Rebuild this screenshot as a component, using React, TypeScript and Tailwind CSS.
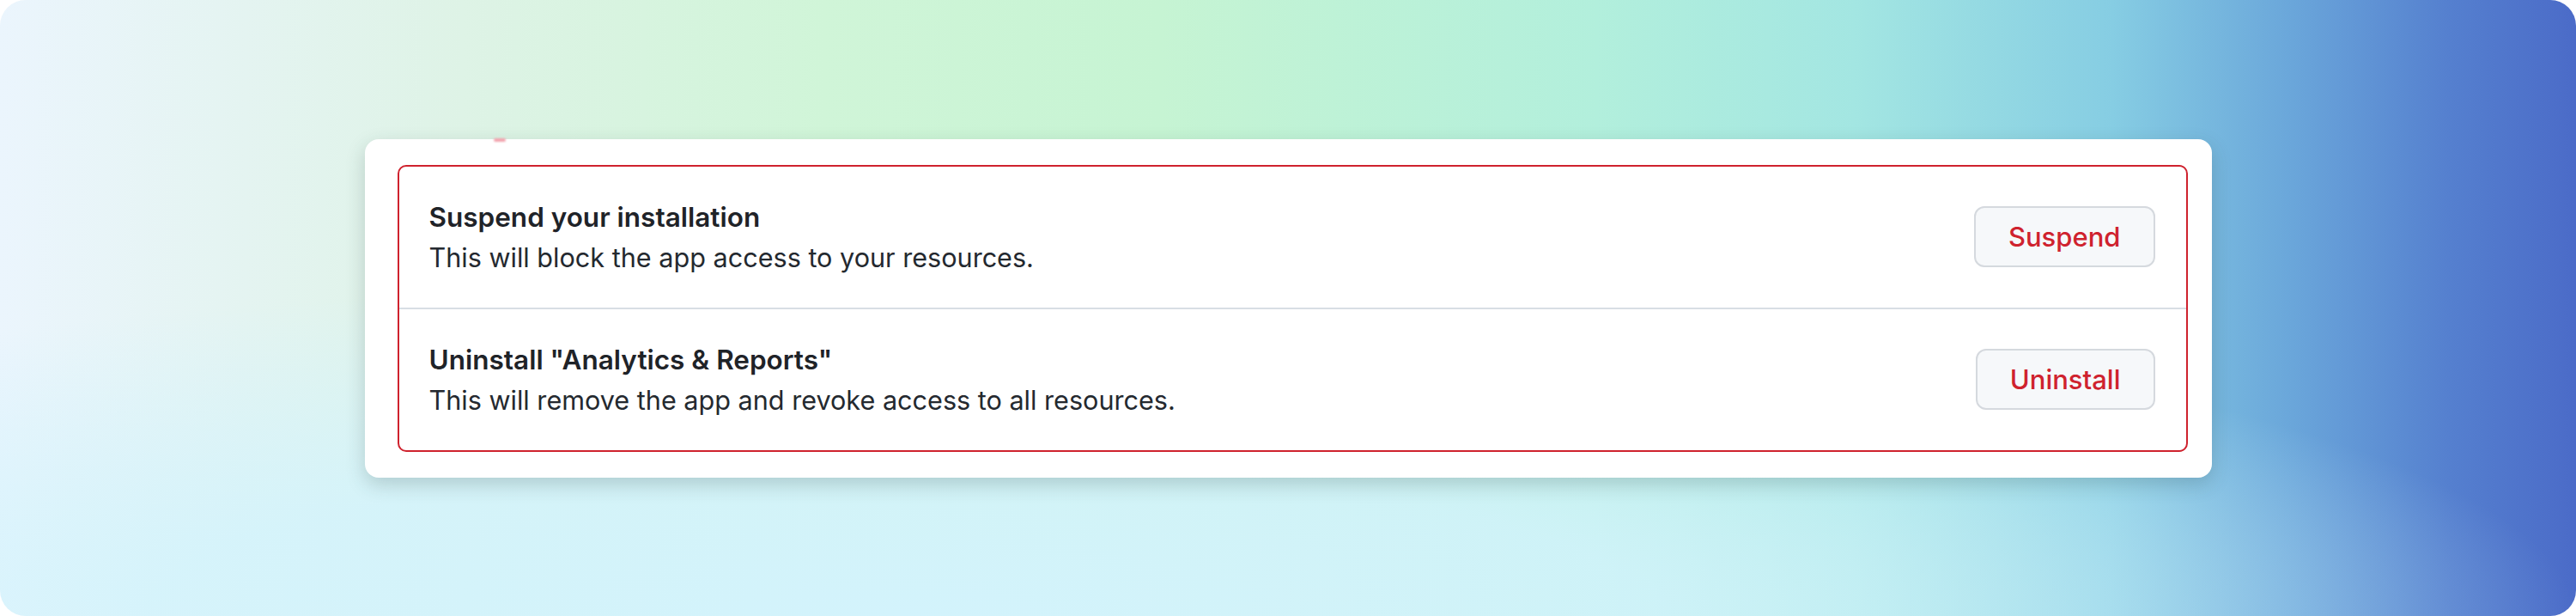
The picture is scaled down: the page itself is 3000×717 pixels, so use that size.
const rows = [
  {
    title: "Suspend your installation",
    desc: "This will block the app access to your resources.",
    action: "Suspend",
  },
  {
    title: 'Uninstall "Analytics & Reports"',
    desc: "This will remove the app and revoke access to all resources.",
    action: "Uninstall",
  },
];

const App = () => (
  <div className="w-[3000px] h-[717px] bg-white">
    <div className="w-full h-full rounded-[30px] flex items-center justify-center overflow-hidden bg-[radial-gradient(ellipse_65%_55%_at_35%_100%,rgba(211,243,252,1)_0%,rgba(211,243,252,0.85)_45%,rgba(211,243,252,0)_100%),linear-gradient(to_right,#ebf5fd_0%,#def3e6_18%,#d0f5d8_32%,#c6f4d3_45%,#b2efdc_62%,#a3e6e2_72%,#86cde3_82%,#6aa6da_89%,#5580cf_95%,#4b6bc8_100%)]">
      <div className="relative w-[2151px] bg-white rounded-[16px] pl-[38px] pr-[28px] py-[30px] shadow-[0_8px_22px_rgba(40,70,70,0.22)] font-['Inter','Liberation_Sans',sans-serif]">
        <div className="absolute left-[150px] top-[-1px] w-[14px] h-[4px] rounded-full bg-[#f2a3ad] blur-[1px]" />
        <div className="border-2 border-[#cf222e] rounded-[10px] flex flex-col">
          {rows.map((r, i) => (
            <div
              key={r.action}
              className={`flex items-center justify-between pl-[35px] pr-[36px] py-[35px] ${i > 0 ? "border-t-2 border-[#d8dee4]" : ""}`}
            >
              <div className="flex flex-col">
                <div className="text-[31.5px] leading-[47px] font-semibold text-[#1f2328]">{r.title}</div>
                <div className="text-[30.6px] leading-[47px] text-[#24292f]">{r.desc}</div>
              </div>
              <button className="h-[71px] px-[38px] rounded-[12px] border-2 border-[#d5d9de] bg-[#f6f8fa] text-[31px] leading-[47px] font-medium text-[#cf222e]">
                {r.action}
              </button>
            </div>
          ))}
        </div>
      </div>
    </div>
  </div>
);

export default App;
